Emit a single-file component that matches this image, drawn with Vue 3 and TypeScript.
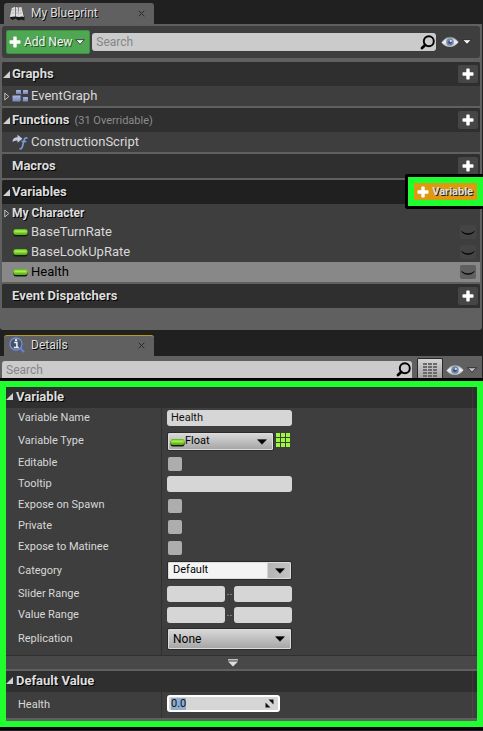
<script setup lang="ts">
import { onMounted, ref } from 'vue'

interface Section {
  title: string
  note?: string
  open: boolean
  items: { name: string; icon: 'graph' | 'function' }[]
}

const sections: Section[] = [
  { title: 'Graphs', open: true, items: [{ name: 'EventGraph', icon: 'graph' }] },
  { title: 'Functions', note: '(31 Overridable)', open: true, items: [{ name: 'ConstructionScript', icon: 'function' }] },
  { title: 'Macros', open: false, items: [] },
]

const variables = ['BaseTurnRate', 'BaseLookUpRate', 'Health']
const selected = ref('Health')

type Kind = 'text' | 'type' | 'check' | 'category' | 'range' | 'replication'
const properties: { id: string; label: string; kind: Kind; value?: string }[] = [
  { id: 'name', label: 'Variable Name', kind: 'text', value: 'Health' },
  { id: 'type', label: 'Variable Type', kind: 'type' },
  { id: 'editable', label: 'Editable', kind: 'check' },
  { id: 'tooltip', label: 'Tooltip', kind: 'text', value: '' },
  { id: 'spawn', label: 'Expose on Spawn', kind: 'check' },
  { id: 'private', label: 'Private', kind: 'check' },
  { id: 'matinee', label: 'Expose to Matinee', kind: 'check' },
  { id: 'category', label: 'Category', kind: 'category' },
  { id: 'slider', label: 'Slider Range', kind: 'range' },
  { id: 'value', label: 'Value Range', kind: 'range' },
  { id: 'replication', label: 'Replication', kind: 'replication' },
]

const healthInput = ref<HTMLInputElement | null>(null)
onMounted(() => {
  healthInput.value?.focus({ preventScroll: true })
  healthInput.value?.select()
})
</script>

<template>
  <svg class="defs" width="0" height="0" aria-hidden="true">
    <defs>
      <linearGradient id="pillFill" x1="0" y1="0" x2="0" y2="1">
        <stop offset="0" stop-color="#5fae1c" />
        <stop offset="0.35" stop-color="#8fe236" />
        <stop offset="1" stop-color="#57a51a" />
      </linearGradient>
      <linearGradient id="nodeFill" x1="0" y1="0" x2="0" y2="1">
        <stop offset="0" stop-color="#aab8e4" />
        <stop offset="1" stop-color="#7583b4" />
      </linearGradient>
      <linearGradient id="eyeFill" x1="0" y1="0" x2="0" y2="1">
        <stop offset="0" stop-color="#b9bcc0" />
        <stop offset="0.5" stop-color="#f0f0f0" />
        <stop offset="1" stop-color="#b4b4b4" />
      </linearGradient>
      <symbol id="plus" viewBox="0 0 12 12">
        <path d="M4.3 1.2Q4.3.5 5 .5h2q.7 0 .7.7v3.1h3.1q.7 0 .7.7v2q0 .7-.7.7H7.7v3.1q0 .7-.7.7H5q-.7 0-.7-.7V7.700H1.200Q.5 7.700.5 7V5q0-.7.7-.7h3.100z" fill="#fff" />
      </symbol>
      <symbol id="pill" viewBox="0 0 15 9">
        <rect x="0.500" y="1.800" width="14" height="6.700" rx="2.200" fill="#151a10" />
        <rect x="0.500" y="1" width="14" height="6" rx="2.200" fill="url(#pillFill)" />
        <rect x="2" y="2.500" width="11" height="1.800" rx="0.900" fill="#a0f04c" />
      </symbol>
      <symbol id="eye" viewBox="0 0 18 12">
        <path d="M.5 6.500Q4 1.200 9 1.200t8.500 4.800Q14 11 9 11T.5 6.500z" fill="url(#eyeFill)" />
        <path d="M.5 6.300Q4 1 9 1t8.500 4.800" fill="none" stroke="#777" stroke-width=".7" />
        <circle cx="9" cy="6" r="3.800" fill="#7189b0" />
        <circle cx="9" cy="6.300" r="1.800" fill="#3f5275" />
        <circle cx="9.800" cy="5" r="1.100" fill="#dfe8f4" />
      </symbol>
      <symbol id="magnifier" viewBox="0 0 15 15">
        <circle cx="8.800" cy="6.200" r="5" fill="none" stroke="#000" stroke-width="1.900" />
        <path d="M5.200 10 2 13" stroke="#000" stroke-width="2.800" stroke-linecap="round" />
      </symbol>
      <symbol id="caret" viewBox="0 0 10 6">
        <path d="M.6.7h8.800L5 5.300z" fill="currentColor" stroke="#111" stroke-width=".7" />
      </symbol>
      <symbol id="open" viewBox="0 0 7 7">
        <path d="M7 0v7H0z" fill="#d0d0d0" />
      </symbol>
      <symbol id="closed" viewBox="0 0 6 9">
        <path d="M.8 1v7l4-3.500z" fill="none" stroke="#c0c0c0" />
      </symbol>
      <symbol id="lid" viewBox="0 0 16 14">
        <path d="M1.500 6.500Q8 11 14.500 6.500 12 9.300 8.500 9.500 4 9.500 1.500 6.500z" fill="#000" stroke="#000" stroke-width=".5" />
      </symbol>
    </defs>
  </svg>

  <main class="editor">
    <section class="blueprint">
      <div class="tabs">
        <div class="tab">
          <svg class="tab-icon" viewBox="0 0 16 16" aria-hidden="true">
            <path d="M1 13 3 3l4-1.500L9 3l3.500-.5L15.500 12v3.500l-3-1-3 1-3-2-3 1.500z" fill="#191919" />
            <path d="M.8 12 2.800 3 6 1.800v9.800zM6.500 11.500V1.800l2.500.7 1 9.500zM10 12 9.500 2.500l3-.5 2.500 10-2-.5z" fill="#dedede" />
            <path d="M3 5h2.500M2.500 8H5M7 5h2M7 8h2M10.500 5h2M10.500 8H13" stroke="#b4b4b4" />
          </svg>
          <h1>My Blueprint</h1>
          <button class="close" aria-label="Close My Blueprint"><svg viewBox="0 0 7 7"><path d="m.7.7 5.600 5.600m0-5.600L.7 6.300" /></svg></button>
        </div>
      </div>
      <div class="blueprint-body">
        <div class="toolbar">
          <button class="add-new">
            <svg class="plus"><use href="#plus" /></svg>
            <span>Add New</span>
            <svg class="caret"><use href="#caret" /></svg>
          </button>
          <label class="search">
            <input type="text" placeholder="Search" aria-label="Search blueprint" />
            <svg class="magnifier"><use href="#magnifier" /></svg>
          </label>
          <button class="view" aria-label="View options">
            <svg class="eye"><use href="#eye" /></svg>
            <svg class="caret"><use href="#caret" /></svg>
          </button>
        </div>

        <section v-for="s in sections" :key="s.title" class="group">
          <header class="group-head">
            <svg v-if="s.open" class="arrow"><use href="#open" /></svg>
            <span v-else class="arrow"></span>
            <h2>{{ s.title }}</h2>
            <span v-if="s.note" class="note">{{ s.note }}</span>
            <button class="add" :aria-label="'Add to ' + s.title"><svg class="plus"><use href="#plus" /></svg></button>
          </header>
          <div v-for="item in s.items" :key="item.name" class="item">
            <svg v-if="item.icon === 'graph'" class="twist"><use href="#closed" /></svg>
            <span v-else class="twist"></span>
            <svg v-if="item.icon === 'graph'" class="item-icon" viewBox="0 0 17 14" aria-hidden="true">
              <path d="M5 8h6M6 8l6-5M6 9l6 3" stroke="#55607f" stroke-width=".8" />
              <rect x="4" y="1" width="5" height="4" rx=".6" fill="url(#nodeFill)" />
              <rect x="11" y="1" width="5" height="4" rx=".6" fill="url(#nodeFill)" />
              <rect x="0.500" y="6.500" width="8" height="6" rx=".6" fill="url(#nodeFill)" />
              <rect x="11" y="8" width="5" height="4.500" rx=".6" fill="url(#nodeFill)" />
            </svg>
            <svg v-else class="item-icon" viewBox="0 0 17 16" aria-hidden="true">
              <path d="M.5 8Q.5 3.300 5.500 3.300V.8l5 4-5 4V6.500Q2.300 6.200.5 8z" fill="#c3cbe2" />
              <path d="M15.500 4.300q-2.500-1.500-3.300 1.700L10.300 13q-.6 2.300-2.800 1.500M9.500 7.500h4.800" fill="none" stroke="#809bdd" stroke-width="1.600" />
            </svg>
            <span>{{ item.name }}</span>
          </div>
        </section>

        <section class="group">
          <header class="group-head active">
            <svg class="arrow"><use href="#open" /></svg>
            <h2>Variables</h2>
            <div class="callout">
              <button class="add-variable"><svg class="plus"><use href="#plus" /></svg><span>Variable</span></button>
            </div>
          </header>
          <div class="item subgroup">
            <svg class="twist"><use href="#closed" /></svg>
            <h3>My Character</h3>
          </div>
          <div v-for="name in variables" :key="name" class="item" :class="{ selected: name === selected }" @click="selected = name">
            <span class="twist"></span>
            <svg class="pill"><use href="#pill" /></svg>
            <span>{{ name }}</span>
            <button class="lid" :aria-label="'Toggle visibility of ' + name"><svg><use href="#lid" /></svg></button>
          </div>
        </section>

        <section class="group">
          <header class="group-head">
            <span class="arrow"></span>
            <h2>Event Dispatchers</h2>
            <button class="add" aria-label="Add event dispatcher"><svg class="plus"><use href="#plus" /></svg></button>
          </header>
        </section>
      </div>
    </section>

    <section class="details">
      <div class="tabs">
        <div class="tab current">
          <svg class="tab-icon" viewBox="0 0 16 16" aria-hidden="true">
            <path d="m11 11 4 4" stroke="#5d84d8" stroke-width="2.200" />
            <circle cx="7" cy="7" r="6" fill="#465066" stroke="#6d90dc" stroke-width="1.300" />
            <path d="M5.200 5.500h2.700v4.800M4.800 10.500h5" fill="none" stroke="#f2f2f2" stroke-width="1.500" />
            <rect x="6" y="2.200" width="2.200" height="1.900" fill="#f2f2f2" />
          </svg>
          <h1>Details</h1>
          <button class="close" aria-label="Close Details"><svg viewBox="0 0 7 7"><path d="m.7.7 5.600 5.600m0-5.600L.7 6.300" /></svg></button>
        </div>
      </div>
      <div class="details-bar">
        <label class="search">
          <input type="text" placeholder="Search" aria-label="Search details" />
          <svg class="magnifier"><use href="#magnifier" /></svg>
        </label>
        <button class="matrix" aria-label="Property matrix">
          <svg viewBox="0 0 14 15">
            <path d="M0 1h4m1 0h4m1 0h4M0 4h4m1 0h4m1 0h4M0 7h4m1 0h4m1 0h4M0 10h4m1 0h4m1 0h4M0 13h4m1 0h4m1 0h4" stroke="#6a6a6a" stroke-width="2" />
          </svg>
        </button>
        <button class="view" aria-label="Details view options">
          <svg class="eye"><use href="#eye" /></svg>
          <svg class="caret"><use href="#caret" /></svg>
        </button>
      </div>

      <div class="frame">
        <section class="card">
          <header class="card-head"><svg class="arrow"><use href="#open" /></svg><h2>Variable</h2></header>
          <div class="props">
            <div v-for="p in properties" :key="p.id" class="prop" :class="'prop-' + p.kind">
              <label :for="p.id">{{ p.label }}</label>
              <div class="control">
                <input v-if="p.kind === 'text'" :id="p.id" class="field" type="text" :value="p.value" />
                <input v-else-if="p.kind === 'check'" :id="p.id" class="check" type="checkbox" />
                <template v-else-if="p.kind === 'type'">
                  <div class="combo with-pill">
                    <svg class="pill"><use href="#pill" /></svg>
                    <select :id="p.id"><option>Float</option></select>
                    <svg class="caret"><use href="#caret" /></svg>
                  </div>
                  <button class="array" aria-label="Make array">
                    <svg viewBox="0 0 14 14"><path d="M0 2h4m1 0h4m1 0h4M0 7h4m1 0h4m1 0h4M0 12h4m1 0h4m1 0h4" stroke="#9cf83c" stroke-width="4" /></svg>
                  </button>
                </template>
                <div v-else-if="p.kind === 'category'" class="combo editable">
                  <select :id="p.id"><option>Default</option></select>
                  <svg class="caret"><use href="#caret" /></svg>
                </div>
                <template v-else-if="p.kind === 'range'">
                  <input :id="p.id" class="field half" type="text" :aria-label="p.label + ' minimum'" />
                  <span class="dots">..</span>
                  <input class="field half" type="text" :aria-label="p.label + ' maximum'" />
                </template>
                <div v-else class="combo large">
                  <select :id="p.id"><option>None</option></select>
                  <svg class="caret"><use href="#caret" /></svg>
                </div>
              </div>
            </div>
          </div>
          <button class="expander" aria-label="Show advanced">
            <svg viewBox="0 0 12 8"><path d="M1 .8h10" stroke="#ddd" stroke-width="1.200" /><path d="M1 2.500h10L6 7.500z" fill="#ddd" /></svg>
          </button>
        </section>
        <section class="card">
          <header class="card-head"><svg class="arrow"><use href="#open" /></svg><h2>Default Value</h2></header>
          <div class="props">
            <div class="prop prop-number">
              <label for="health">Health</label>
              <div class="control">
                <div class="spin">
                  <input id="health" ref="healthInput" type="text" value="0.0" />
                  <svg viewBox="0 0 9 9" aria-hidden="true"><path d="M3.500 0.500H8.500v5zM0.500 3.500V8.500h5z" fill="#111" /></svg>
                </div>
              </div>
            </div>
          </div>
        </section>
      </div>
    </section>
  </main>
</template>

<style>
body {
  background: #202020;
}
</style>

<style scoped>
* {
  box-sizing: border-box;
}
.defs {
  position: absolute;
}
.editor {
  min-height: 100vh;
  overflow: hidden;
  background: #202020;
  color: #d8d8d8;
  font-family: Roboto, "Liberation Sans", sans-serif;
  font-size: 13px;
  line-height: 16px;
}
h1, h2, h3 {
  margin: 0;
  font-size: 13px;
  font-weight: 700;
  color: #dedede;
  text-shadow: 1px 1px 0 #000;
}
button, input, select {
  margin: 0;
  padding: 0;
  border: 0;
  font: inherit;
  color: inherit;
  background: none;
  outline: none;
}
svg {
  display: block;
  flex: none;
}
.plus {
  width: 12px;
  height: 12px;
}
.caret {
  width: 10px;
  height: 6px;
}
.eye {
  width: 18px;
  height: 12px;
}
.pill {
  width: 15px;
  height: 9px;
}

.tabs {
  display: flex;
  padding: 3px 4px 0;
}
.tab {
  display: flex;
  align-items: center;
  width: 150px;
  height: 21px;
  padding: 0 9px 1px 5px;
  border-radius: 3px 3px 0 0;
  background: #606060;
}
.tab h1 {
  flex: 1;
  padding-left: 6px;
  font-size: 12px;
  font-weight: 400;
}
.tab-icon {
  width: 16px;
  height: 16px;
}
.close svg {
  width: 7px;
  height: 7px;
  fill: none;
  stroke: #2c2c2c;
}

.blueprint-body {
  margin-right: 1px;
  padding: 2px 2px 22px;
  border-radius: 0 0 3px 3px;
  background: #606060;
}
.toolbar {
  display: flex;
  align-items: center;
  height: 32px;
  margin-bottom: 4px;
  padding: 0 8px 0 4px;
  border-radius: 3px;
  background: #3e3e3e;
}
.add-new {
  display: flex;
  align-items: center;
  gap: 3px;
  height: 24px;
  margin-right: 2px;
  padding: 0 4px 0 2px;
  border: 1px solid #3f8f41;
  border-radius: 2px;
  background: #50a753;
  color: #f4f4f4;
  font-size: 12px;
  text-shadow: 1px 1px 0 #1f5220;
}
.search {
  display: flex;
  flex: 1;
  align-items: center;
  height: 18px;
  padding: 0 1px 0 4px;
  border-radius: 3px;
  background: #cbcbcb;
  font-size: 12px;
}
.search input {
  flex: 1;
  min-width: 0;
  color: #222;
}
.search input::placeholder {
  color: #868686;
  opacity: 1;
}
.magnifier {
  width: 15px;
  height: 15px;
}
.view {
  display: flex;
  align-items: center;
  gap: 3px;
  margin-left: 5px;
  color: #f4f4f4;
}

.group {
  margin-bottom: 2px;
  background: #3e3e3e;
}
.group:last-child {
  margin-bottom: 0;
}
.group-head {
  position: relative;
  display: flex;
  align-items: center;
  height: 24px;
  padding-right: 2px;
  border-radius: 3px 3px 0 0;
  background: #2f2f2f;
}
.group-head.active {
  background: #202020;
}
.arrow {
  width: 7px;
  height: 7px;
  margin: 0 2px 0 1px;
}
.note {
  padding: 2px 0 0 5px;
  font-size: 11px;
  color: #8c8c8c;
}
.add {
  display: grid;
  place-items: center;
  width: 20px;
  height: 18px;
  margin-left: auto;
  border-radius: 2px;
  background: #464646;
}
.item {
  display: flex;
  align-items: center;
  height: 20px;
  padding-right: 4px;
}
.item.subgroup {
  height: 18px;
}
.item.selected {
  background: #888;
  color: #000;
}
.subgroup h3 {
  font-size: 12px;
}
.twist {
  width: 6px;
  height: 9px;
  margin: 0 2px;
}
.item-icon {
  width: 17px;
  height: 16px;
  margin-right: 2px;
}
.item .pill {
  margin: 0 3px 0 1px;
}
.lid {
  width: 16px;
  height: 14px;
  margin-left: auto;
  border-radius: 2px;
  background: #444;
}
.selected .lid {
  background: #606060;
}
.lid svg {
  width: 16px;
  height: 14px;
}
/* Highlight box drawn over the Variables header */
.callout {
  position: absolute;
  z-index: 1;
  top: -6px;
  right: -3px;
  padding: 6px;
  border: solid #000;
  border-width: 3px 0 3px 3px;
  border-radius: 3px 0 0 3px;
  background: linear-gradient(#1fff30, #1fff30) padding-box;
}
.add-variable {
  display: flex;
  align-items: center;
  gap: 3px;
  height: 17px;
  padding: 0 4px 0 3px;
  background: #dd9a10;
  color: #dedede;
  font-size: 11px;
  font-weight: 700;
  text-shadow: 1px 1px 0 #222;
}

.details .tabs {
  padding-top: 5px;
}
.tab.current {
  padding-bottom: 2px;
  border-top: 1px solid #b59c20;
}
.details-bar {
  display: flex;
  height: 22px;
  margin-right: 1px;
  padding: 2px 5px 0 2px;
  background: #606060;
}
.details-bar .search {
  margin-top: 3px;
  height: 17px;
  border-radius: 3px 3px 0 0;
}
.matrix {
  display: grid;
  place-items: end center;
  width: 26px;
  height: 20px;
  margin-left: 5px;
  border: 1px solid #292929;
  border-bottom: 0;
  border-radius: 2px 2px 0 0;
  background: linear-gradient(#d4d4d4, #a5a5a5);
}
.matrix svg {
  width: 14px;
  height: 15px;
}
.details-bar .view {
  margin: 3px 0 0 3px;
  color: #bbb;
}

.frame {
  border: 6px solid #1fff30;
  outline: 3px solid #000;
  margin-top: 3px;
  padding-bottom: 1px;
  background: #606060;
}
.card {
  margin-bottom: 2px;
  background: #3e3e3e;
}
.card-head {
  display: flex;
  align-items: center;
  height: 21px;
  padding-bottom: 2px;
  background: #2f2f2f;
  box-shadow: inset -4px 0 0 #2f2f2f, inset -5px 0 0 #3a3a3a;
}
.card-head .arrow {
  margin: 0 3px 0 0;
}
.props {
  background: linear-gradient(#484848, #484848) right 4px top / 1px 100% no-repeat;
}
.prop {
  display: grid;
  grid-template-columns: 155px 1fr;
  min-height: 21px;
  font-size: 11px;
}
.prop > label {
  align-self: center;
  padding-left: 12px;
  padding-bottom: 1px;
}
.control {
  display: flex;
  align-items: flex-start;
  padding: 2px 0 0 5px;
  border-left: 1px solid #303030;
}
.prop-type {
  min-height: 24px;
}
.prop-category {
  min-height: 26px;
}
.prop-replication {
  min-height: 29px;
}
.prop-replication > label {
  padding-bottom: 3px;
}
.prop-number {
  min-height: 26px;
}
.prop-category .control,
.prop-type .control,
.prop-number .control {
  padding-top: 3px;
}
.prop-check .control {
  padding: 4px 0 0 6px;
}
.field {
  width: 125px;
  height: 16px;
  padding: 0 4px;
  border-radius: 3px;
  background: #d6d6d6;
  color: #111;
}
.field.half {
  width: 58px;
}
.dots {
  width: 9px;
  text-align: center;
  line-height: 12px;
  color: #aaa;
}
.check {
  appearance: none;
  width: 14px;
  height: 14px;
  border-radius: 2px;
  background: #adadad;
}
.check:checked {
  background: #e0e0e0;
}
.combo {
  position: relative;
  width: 125px;
  height: 19px;
  border: 1px solid #2a2a2a;
  border-radius: 2px;
  background: linear-gradient(#dadada, #a4a4a4);
  box-shadow: inset 0 0 0 1px #dcdcdc;
  color: #000;
}
.combo select {
  appearance: none;
  display: block;
  width: 100%;
  height: 100%;
  padding: 0 20px 1px 5px;
}
.combo .caret {
  position: absolute;
  right: 6px;
  top: 50%;
  margin-top: -3px;
  pointer-events: none;
}
.combo.with-pill {
  width: 107px;
}
.combo.with-pill select {
  padding-left: 17px;
}
.combo .pill {
  position: absolute;
  left: 2px;
  top: 5px;
}
.combo.editable {
  background: linear-gradient(90deg, #f4f4f4 99px, #b4b4b4 100px, #c4c4c4);
}
.combo.large {
  height: 22px;
}
.combo.large select {
  font-size: 12px;
}
.array {
  margin: 1px 0 0 2px;
}
.array svg {
  width: 14px;
  height: 14px;
}
.expander {
  display: grid;
  place-items: center;
  width: 100%;
  height: 14px;
  padding-right: 17px;
  border-top: 1px solid #303030;
  background: #484848;
}
.expander svg {
  width: 12px;
  height: 8px;
}
.spin {
  display: flex;
  align-items: center;
  width: 113px;
  height: 17px;
  padding: 0 4px 0 2px;
  border: 2px solid #fff;
  border-radius: 3px;
  background: #d6d6d6;
}
.spin input {
  flex: 1;
  min-width: 0;
  height: 12px;
  line-height: 12px;
  font-size: 11px;
  color: #111;
}
.spin input::selection {
  background: #8eadcf;
  color: #111;
}
.spin svg {
  width: 9px;
  height: 9px;
}
</style>
